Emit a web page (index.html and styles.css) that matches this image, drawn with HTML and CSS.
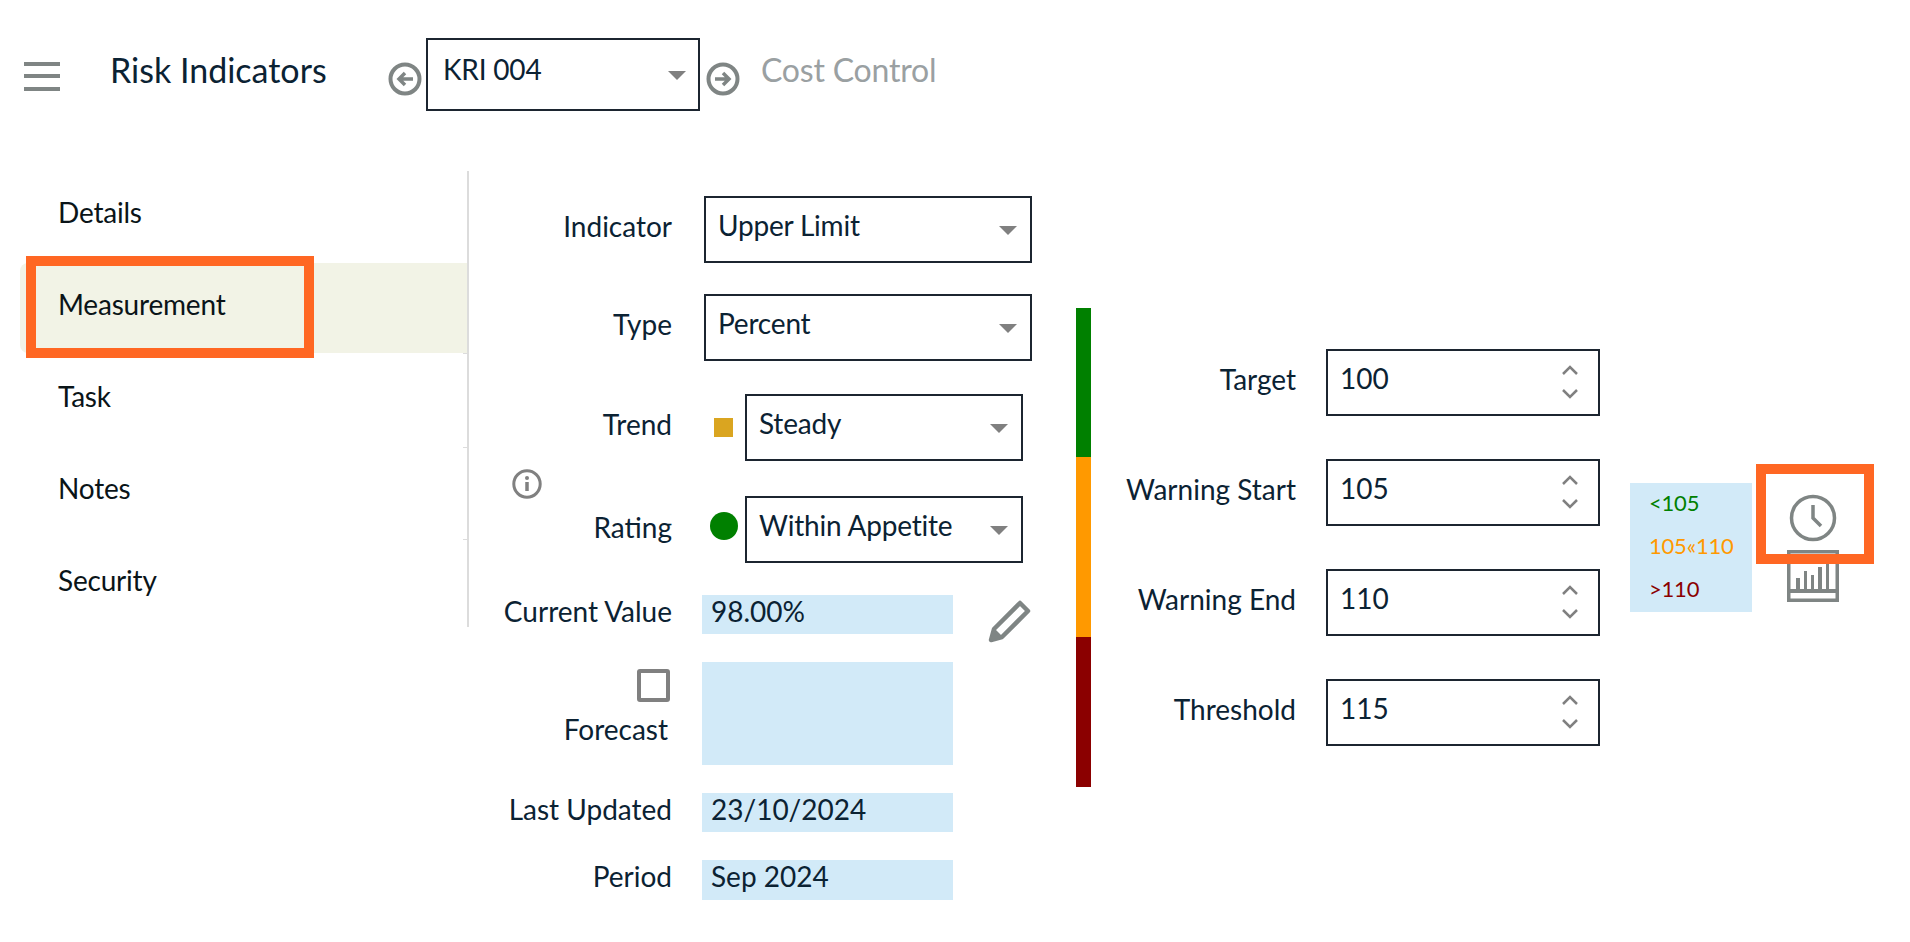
FILE: index.html
```html
<!DOCTYPE html>
<html lang="en">
<head>
<meta charset="utf-8">
<title>Risk Indicators</title>
<link rel="stylesheet" href="styles.css">
</head>
<body>
<header class="topbar">
  <svg class="hamburger" width="36" height="29" viewBox="0 0 36 29"><path d="M0 2h36M0 14h36M0 27h36" stroke="#7f8584" stroke-width="4" fill="none"/></svg>
  <h1 class="title">Risk Indicators</h1>
  <svg class="nav-arrow" width="34" height="34" viewBox="0 0 34 34"><circle cx="17" cy="17" r="14.5" fill="none" stroke="#7f8584" stroke-width="4"/><path d="M25 17H11M17 11l-6 6 6 6" fill="none" stroke="#7f8584" stroke-width="3.5"/></svg>
  <div class="select select-kri"><span>KRI 004</span><i class="caret"></i></div>
  <svg class="nav-arrow next" width="34" height="34" viewBox="0 0 34 34"><circle cx="17" cy="17" r="14.5" fill="none" stroke="#7f8584" stroke-width="4"/><path d="M9 17h14M17 11l6 6-6 6" fill="none" stroke="#7f8584" stroke-width="3.5"/></svg>
  <span class="subtitle">Cost Control</span>
</header>
<main class="main">
  <nav class="sidenav">
    <a class="nav-item">Details</a>
    <a class="nav-item active">Measurement</a>
    <a class="nav-item">Task</a>
    <a class="nav-item">Notes</a>
    <a class="nav-item">Security</a>
    <div class="highlight highlight-nav"></div>
  </nav>
  <section class="form">
    <svg class="info" width="30" height="30" viewBox="0 0 30 30"><circle cx="15" cy="15" r="13.2" fill="none" stroke="#808080" stroke-width="3"/><circle cx="15" cy="9" r="2" fill="#808080"/><path d="M15 13v9" stroke="#808080" stroke-width="3.5"/></svg>
    <div class="row r-indicator"><label class="lbl">Indicator</label><div class="select wide"><span>Upper Limit</span><i class="caret"></i></div></div>
    <div class="row r-type"><label class="lbl">Type</label><div class="select wide"><span>Percent</span><i class="caret"></i></div></div>
    <div class="row r-trend"><label class="lbl">Trend</label><i class="square"></i><div class="select narrow"><span>Steady</span><i class="caret"></i></div></div>
    <div class="row r-rating"><label class="lbl">Rating</label><i class="dot"></i><div class="select narrow"><span>Within Appetite</span><i class="caret"></i></div></div>
    <div class="row r-current"><label class="lbl">Current Value</label><div class="readout">98.00%</div>
      <svg class="pencil" width="44" height="44" viewBox="0 0 44 44"><path d="M33 4l8 8-26 26-11 3 3-11z" fill="none" stroke="#7f8584" stroke-width="4.5" stroke-linejoin="round"/><path d="M3 41l4-12 8 8z" fill="#7f8584"/></svg>
    </div>
    <div class="row r-forecast"><div class="lbl forecast-lbl"><i class="checkbox"></i><span>Forecast</span></div><div class="readout tall"></div></div>
    <div class="row r-updated"><label class="lbl">Last Updated</label><div class="readout">23/10/2024</div></div>
    <div class="row r-period"><label class="lbl">Period</label><div class="readout">Sep 2024</div></div>
  </section>
  <div class="rag"><i class="g"></i><i class="a"></i><i class="r"></i></div>
  <section class="limits">
    <div class="limit"><label class="lbl2">Target</label><div class="spin"><span>100</span><svg class="chev" width="16" height="34" viewBox="0 0 16 34"><path d="M1 9l7-7 7 7M1 25l7 7 7-7" fill="none" stroke="#808080" stroke-width="2.5"/></svg></div></div>
    <div class="limit"><label class="lbl2">Warning Start</label><div class="spin"><span>105</span><svg class="chev" width="16" height="34" viewBox="0 0 16 34"><path d="M1 9l7-7 7 7M1 25l7 7 7-7" fill="none" stroke="#808080" stroke-width="2.5"/></svg></div></div>
    <div class="limit"><label class="lbl2">Warning End</label><div class="spin"><span>110</span><svg class="chev" width="16" height="34" viewBox="0 0 16 34"><path d="M1 9l7-7 7 7M1 25l7 7 7-7" fill="none" stroke="#808080" stroke-width="2.5"/></svg></div></div>
    <div class="limit"><label class="lbl2">Threshold</label><div class="spin"><span>115</span><svg class="chev" width="16" height="34" viewBox="0 0 16 34"><path d="M1 9l7-7 7 7M1 25l7 7 7-7" fill="none" stroke="#808080" stroke-width="2.5"/></svg></div></div>
  </section>
  <aside class="legend">
    <div class="lg-green">&lt;105</div>
    <div class="lg-amber">105«110</div>
    <div class="lg-red">&gt;110</div>
  </aside>
  <div class="tools">
    <svg class="clock" width="48" height="48" viewBox="0 0 48 48"><circle cx="24" cy="24" r="21.5" fill="none" stroke="#7f8584" stroke-width="3.5"/><path d="M24 11v13l8 8" fill="none" stroke="#7f8584" stroke-width="3.5"/></svg>
    <svg class="chart" width="52" height="52" viewBox="0 0 52 52"><path d="M1.75 1.75h48.5v48.5H1.75z" fill="none" stroke="#7f8584" stroke-width="3.5"/><path d="M2 43h48v-4H2zM9 39V28h4v11zM17 39V21h3v18zM24 39V25h3v14zM31 39V17h4v22zM39 39V10h3v29z" fill="#7f8584"/></svg>
    <div class="highlight highlight-clock"></div>
  </div>
</main>
</body>
</html>
```
FILE: styles.css
```css
* { box-sizing: border-box; }
html, body { margin: 0; padding: 0; }
body {
  width: 1910px;
  height: 942px;
  overflow: hidden;
  background: #fff;
  color: #0b2233;
  font-family: Lato, "Noto Sans", sans-serif;
  font-size: 28px;
  position: relative;
}
.topbar {
  height: 171px;
  padding: 38px 0 0 24px;
  display: flex;
  align-items: flex-start;
}
.hamburger { margin-top: 24px; flex: none; }
.title { margin: 10px 0 0 50px; font-size: 34px; font-weight: 400; line-height: 44px; width: 278px; white-space: nowrap; flex: none; }
.nav-arrow { margin-top: 24px; flex: none; width: 34px; }
.nav-arrow.next { margin-left: 6px; }
.subtitle { margin: 10px 0 0 21px; font-size: 32px; line-height: 44px; color: #9aa0a2; letter-spacing: -0.2px; }
.select {
  border: 2px solid #1c2530;
  height: 67px;
  background: #fff;
  position: relative;
  display: block;
  line-height: 54px;
  flex: none;
}
.select span { position: absolute; left: 12px; top: 0; white-space: nowrap; letter-spacing: -0.2px; }
.select-kri { width: 274px; height: 73px; margin-left: 4px; }
.select-kri span { left: 15px; top: 2px; }
.select-kri .caret { top: 31px; right: 12px; }
.wide { width: 328px; margin-left: 32px; }
.narrow { width: 278px; }
.caret {
  position: absolute;
  right: 13px;
  top: 28px;
  width: 0; height: 0;
  border-left: 9px solid transparent;
  border-right: 9px solid transparent;
  border-top: 9px solid #808080;
}
.main { display: flex; align-items: flex-start; }
.sidenav { width: 469px; padding-left: 20px; position: relative; flex: none; border-right: 2px solid #dcdcdc; height: 456px; }
.nav-item {
  display: block;
  height: 92px;
  padding: 23px 0 0 38px;
  line-height: 36px;
  color: #0a1418;
  position: relative;
  letter-spacing: -0.2px;
}
.nav-item::after { content: ""; position: absolute; right: 0; bottom: -1px; width: 4px; height: 1px; background: #dcdcdc; }
.nav-item:nth-child(5)::after { display: none; }
.nav-item.active { background: #f2f3e6; border-radius: 8px 0 0 8px; height: 90px; margin-bottom: 2px; }
.highlight { position: absolute; border: 10px solid #ff6723; pointer-events: none; }
.highlight-nav { left: 26px; top: 85px; width: 288px; height: 102px; }
.form { width: 607px; flex: none; position: relative; padding-top: 25px; }
.info { position: absolute; left: 43px; top: 298px; }
.row { display: flex; align-items: flex-start; }
.lbl { width: 203px; flex: none; text-align: right; line-height: 36px; white-space: nowrap; }
.r-indicator .lbl, .r-type .lbl { margin-top: 12px; }
.r-trend .lbl { margin-top: 12px; }
.r-rating .lbl { margin-top: 13px; }
.r-type { margin-top: 31px; }
.r-trend { margin-top: 33px; }
.r-rating { margin-top: 35px; }
.r-current { margin-top: 32px; height: 39px; }
.r-forecast { margin-top: 28px; }
.r-updated { margin-top: 28px; }
.r-period { margin-top: 28px; }
.square { width: 19px; height: 19px; background: #daa520; margin: 24px 12px 0 42px; flex: none; }
.dot { width: 28px; height: 28px; border-radius: 50%; background: #008000; margin: 16px 7px 0 38px; flex: none; }
.readout { width: 251px; height: 39px; margin-left: 30px; padding-left: 9px; background: #d2eaf8; line-height: 33px; flex: none; }
.r-period .readout { height: 40px; }
.tall { height: 103px; }
.r-current .lbl, .r-updated .lbl, .r-period .lbl { line-height: 33px; }
.pencil { margin: 4px 0 0 34px; flex: none; }
.forecast-lbl { height: 103px; display: flex; flex-direction: column; align-items: flex-end; padding-right: 2px; }
.forecast-lbl span { margin: 9px 2px 0 0; }
.checkbox { width: 33px; height: 33px; border: 4px solid #808080; border-radius: 3px; margin-top: 7px; display: block; }
.rag { width: 15px; margin-top: 137px; flex: none; }
.rag i { display: block; }
.rag .g { height: 149px; background: #008000; }
.rag .a { height: 180px; background: #ff9900; }
.rag .r { height: 150px; background: #8b0000; }
.limits { width: 516px; flex: none; padding-top: 178px; }
.limit { display: flex; align-items: flex-start; margin-bottom: 43px; height: 67px; }
.lbl2 { width: 205px; text-align: right; line-height: 36px; margin-top: 12px; white-space: nowrap; flex: none; }
.spin { width: 274px; height: 67px; margin-left: 30px; border: 2px solid #1c2530; position: relative; flex: none; padding-left: 12px; line-height: 54px; }
.chev { position: absolute; right: 20px; top: 14px; }
.legend { width: 122px; height: 129px; margin: 312px 0 0 23px; background: #d2eaf8; padding-left: 19px; font-size: 22px; letter-spacing: -0.2px; flex: none; }
.legend div { line-height: 30px; margin-top: 13px; white-space: nowrap; }
.legend .lg-green { margin-top: 5px; }
.lg-green { color: #008000; }
.lg-amber { color: #ff9900; }
.lg-red { color: #8b0000; }
.tools { flex: none; width: 120px; margin: 293px 0 0 4px; position: relative; height: 140px; display: flex; flex-direction: column; align-items: flex-start; }
.clock { margin: 30px 0 0 33px; }
.chart { margin: 8px 0 0 31px; }
.highlight-clock { left: 0; top: 0; width: 118px; height: 100px; }
```
